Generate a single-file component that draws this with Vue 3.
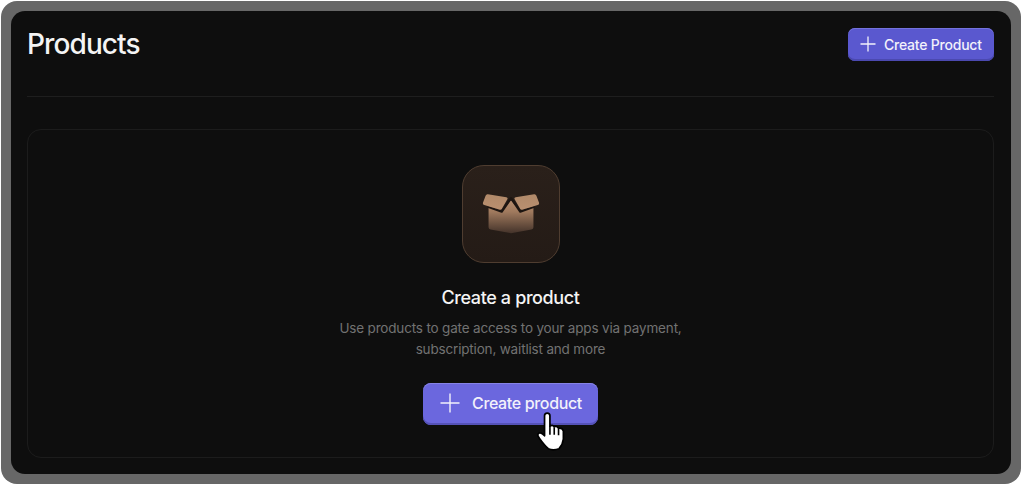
<script setup>
const blurb = ['Use products to gate access to your apps via payment,', 'subscription, waitlist and more'];
</script>

<template>
  <div class="frame">
    <main class="panel">
      <header class="top">
        <h1 class="title">Products</h1>
        <button class="btn btn-small">
          <svg width="16" height="16" viewBox="0 0 16 16"><path d="M8 .5v15M.5 8h15" stroke="currentColor" stroke-width="1.3" fill="none" /></svg>
          Create Product
        </button>
      </header>
      <section class="empty">
        <div class="tile">
          <svg width="66" height="50" viewBox="0 0 200 150">
            <defs>
              <linearGradient id="boxBody" x1="0" y1="0" x2="0" y2="1">
                <stop offset="0" stop-color="#b68d6e" />
                <stop offset="0.35" stop-color="#a07a5e" />
                <stop offset="1" stop-color="#44332a" />
              </linearGradient>
              <linearGradient id="boxFlap" x1="0" y1="0" x2="0" y2="1">
                <stop offset="0" stop-color="#b08969" />
                <stop offset="1" stop-color="#ba9070" />
              </linearGradient>
            </defs>
            <path d="M32 52 L72 70 L100 36 L128 70 L168 52 V118 Q168 123 162 125 L100 136 L38 125 Q32 123 32 118 Z" fill="url(#boxBody)" />
            <path d="M30 56 L72 71 L100 30 L128 71 L170 56" stroke="#1d1511" stroke-width="7" fill="none" stroke-linejoin="round" />
            <path d="M30 18 L86 27 Q92 28 89 33 L72 63 Q70 66 66 65 L19 51 Q13 49 15 44 L23 23 Q25 17 30 18 Z" fill="url(#boxFlap)" />
            <path d="M170 18 L114 27 Q108 28 111 33 L128 63 Q130 66 134 65 L181 51 Q187 49 185 44 L177 23 Q175 17 170 18 Z" fill="url(#boxFlap)" />
          </svg>
        </div>
        <h2 class="heading">Create a product</h2>
        <p class="blurb">
          <span v-for="line in blurb" :key="line">{{ line }}</span>
        </p>
        <div class="cta">
          <button class="btn btn-large">
            <svg width="20" height="20" viewBox="0 0 20 20"><path d="M10 .5v19M.5 10h19" stroke="currentColor" stroke-width="1.400" fill="none" /></svg>
            Create product
          </button>
          <svg class="cursor" width="28" height="40" viewBox="0 0 26 37">
            <path d="M7 3.500 Q7 1 9.500 1 Q12 1 12 3.500 V13 Q14.500 11.500 16 13.500 Q18.500 12.500 20 15 Q23.500 14.500 24.500 17.500 V25 Q24 30 20.500 34 Q15 36 10.500 34 Q7 31 2 24 Q-0.500 21 2 19.500 Q4 18.500 7 22 Z" fill="#fff" stroke="#000" stroke-width="1.600" stroke-linejoin="round" />
            <path d="M12 13v8M16 14v7M20 15.500v6" stroke="#000" stroke-width="1.500" fill="none" />
          </svg>
        </div>
      </section>
    </main>
  </div>
</template>

<style>
html, body {
  background: #fff;
}
</style>

<style scoped>
.frame {
  width: 1020px;
  height: 483px;
  margin: 1px;
  padding: 10px;
  box-sizing: border-box;
  background: #676767;
  border-radius: 16px;
  font-family: Inter, "Liberation Sans", sans-serif;
}

.panel {
  height: 100%;
  box-sizing: border-box;
  padding: 0 17px 16px 16px;
  background: #0e0e0e;
  border-radius: 14px;
  display: flex;
  flex-direction: column;
}

.top {
  height: 86px;
  flex: none;
  box-sizing: border-box;
  padding-top: 17px;
  display: flex;
  justify-content: space-between;
  align-items: flex-start;
  border-bottom: 1px solid #1e1e1e;
}

.title {
  margin: 0;
  font-size: 28px;
  line-height: 33px;
  font-weight: 500;
  letter-spacing: -0.9px;
  color: #f4f4f4;
}

.btn {
  display: flex;
  align-items: center;
  border: 0;
  color: #f2f1fb;
  font-family: inherit;
  font-weight: 500;
}

.btn-small {
  width: 146px;
  height: 33px;
  padding: 0 0 1px 12px;
  gap: 8px;
  font-size: 14px;
  letter-spacing: -0.22px;
  border-radius: 7px;
  background: #5a58cf;
  box-shadow: inset 0 1px 0 #7472de, inset 0 -2px 0 #4b49b0;
}

.empty {
  flex: 1;
  margin-top: 32px;
  border: 1px solid #1c1c1c;
  border-radius: 14px;
  display: flex;
  flex-direction: column;
  align-items: center;
  padding-top: 35px;
}

.tile {
  width: 98px;
  height: 98px;
  box-sizing: border-box;
  border: 1px solid #4f3d30;
  border-radius: 22px;
  background: linear-gradient(#2a201a, #241b16);
  display: flex;
  align-items: center;
  justify-content: center;
  padding-bottom: 2px;
}

.heading {
  margin: 24px 0 0;
  font-size: 18px;
  line-height: 22px;
  font-weight: 500;
  letter-spacing: -0.38px;
  color: #f4f4f4;
}

.blurb {
  margin: 9px 0 0;
  font-size: 13.5px;
  line-height: 21px;
  letter-spacing: -0.17px;
  color: #727272;
  text-align: center;
}

.blurb span {
  display: block;
}

.cta {
  position: relative;
  margin-top: 23px;
}

.btn-large {
  width: 175px;
  height: 42px;
  padding: 0 0 3px 17px;
  gap: 12px;
  font-size: 16px;
  letter-spacing: -0.35px;
  border-radius: 8px;
  background: #6b67de;
  box-shadow: inset 0 1px 0 #8683e6, inset 0 -2px 0 #5552b8;
}

.cursor {
  position: absolute;
  left: 114px;
  top: 29px;
}
</style>
